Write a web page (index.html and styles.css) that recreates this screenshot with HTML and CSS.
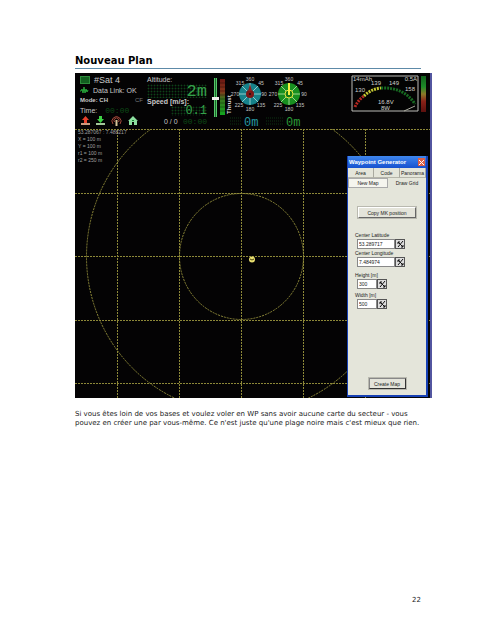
FILE: index.html
```html
<!DOCTYPE html>
<html lang="fr">
<head>
<meta charset="utf-8">
<title>Nouveau Plan</title>
<link rel="stylesheet" href="styles.css">
</head>
<body>
<main class="page">
  <h1 class="title">Nouveau Plan</h1>
  <section class="screen">
    <header class="hud">
      <div class="status">
        <div class="row sat"><span class="lamp"></span>#Sat 4</div>
        <div class="row link">
          <svg width="9" height="7" viewBox="0 0 9 7"><path d="M0 4h1l1-2 1 4 1-6 1 6 1-4 1 3 1-2" fill="none" stroke="#27a83a"/></svg>
          Data Link: OK
        </div>
        <div class="row mode"><b>Mode: CH</b><span class="dim">CF</span></div>
        <div class="row time">Time: <span class="led led-dim">00:00</span></div>
        <div class="row icons">
          <svg width="9" height="10" viewBox="0 0 9 10"><path d="M4.500 0 8 4H6v3H3V4H1z" fill="#e8402c"/><path d="M0 7h9v2H0z" fill="#c99a80"/></svg>
          <svg width="9" height="10" viewBox="0 0 9 10"><path d="M3 0h3v3h2L4.500 7 1 3h2z" fill="#3ed245"/><path d="M0 7h9v2H0z" fill="#a3c79a"/></svg>
          <svg width="11" height="10" viewBox="0 0 11 10"><path d="M2 8a4.500 4.500 0 1 1 7 0M3.500 6a2.500 2.500 0 1 1 4 0" fill="none" stroke="#a84a3c"/><path d="M5.500 4v6" stroke="#d7c59a" stroke-width="2"/></svg>
          <svg width="10" height="10" viewBox="0 0 10 10"><path d="M5 0 10 5H9v4H6V6H4v3H1V5H0z" fill="#8de0a0"/><path d="M4 4h2v1H4z" fill="#168331"/></svg>
        </div>
      </div>
      <div class="flight">
        <div class="label">Altitude:</div>
        <div class="led led-big">2m</div>
        <div class="label speed">Speed [m/s]:</div>
        <div class="led led-mid">0.1</div>
        <div class="count"><span>0 / 0</span><span class="led led-dim">00:00</span></div>
      </div>
      <svg class="thrust" width="20" height="56" viewBox="0 0 20 56">
        <defs>
          <linearGradient id="heat" x2="0" y2="1"><stop stop-color="#6b1712"/><stop offset=".35" stop-color="#85351a"/><stop offset=".55" stop-color="#39751f"/><stop offset="1" stop-color="#12a51f"/></linearGradient>
          <linearGradient id="load" x2="0" y2="1"><stop stop-color="#12601c"/><stop offset=".3" stop-color="#1c8a28"/><stop offset=".5" stop-color="#8a7a28"/><stop offset=".7" stop-color="#8a2218"/><stop offset="1" stop-color="#5c100e"/></linearGradient>
        </defs>
        <path d="M1.500 5v39" stroke="#55c96a" stroke-width="3"/><path d="M1.500 5v39" stroke="#1d6a2d"/>
        <path d="M6 6h5v36H6z" fill="url(#heat)"/>
        <path d="M6 10h5M6 14h5M6 18h5M6 22h5M6 26h5M6 30h5M6 34h5M6 38h5" stroke="#000" stroke-opacity=".35"/>
        <path d="M-2 24h7v3h-7z" fill="#f0f0ec"/>
        <text class="thrust-text" transform="translate(17 41) rotate(-90)">Thrust</text>
      </svg>
      <svg class="dial" width="40" height="56" viewBox="0 0 40 56">
        <circle cx="16" cy="21" r="11" fill="#16828b"/>
        <path d="M16 10v22M5 21h22M8 13l16 16M24 13 8 29" stroke="#91c9c9"/>
        <circle cx="16" cy="21" r="4" fill="#7d1716"/><circle cx="16" cy="21" r="1" fill="#111"/><path d="m16 11-2 7h4z" fill="#8c2422"/>
        <g class="deg"><text x="16" y="8">360</text><text x="27" y="12">45</text><text x="30" y="23">90</text><text x="27" y="34">135</text><text x="16" y="38">180</text><text x="5" y="34">225</text><text x="1" y="23">270</text><text x="6" y="12">315</text></g>
        <path class="matrix" d="M-4 45h12M-4 48h12M-4 51h12"/>
        <text class="seg seg-cyan" x="10" y="53">0m</text>
      </svg>
      <svg class="dial" width="40" height="56" viewBox="0 0 40 56">
        <circle cx="15" cy="21" r="11" fill="#189020"/>
        <path d="M15 10v22M4 21h22M7 13l16 16M23 13 7 29" stroke="#9bd58d"/>
        <circle cx="15" cy="21" r="4" fill="#157b19" stroke="#e6e63b"/><path d="M15 10v12" stroke="#f3f043" stroke-width="2"/>
        <g class="deg"><text x="15" y="8">360</text><text x="26" y="12">45</text><text x="30" y="23">90</text><text x="26" y="34">135</text><text x="15" y="38">180</text><text x="4" y="34">225</text><text x="-1" y="23">270</text><text x="5" y="12">315</text></g>
        <path class="matrix" d="M-8 45h18M-8 48h18M-8 51h18"/>
        <text class="seg seg-green" x="12" y="53">0m</text>
      </svg>
      <svg class="meter" width="78" height="56" viewBox="0 0 78 56">
        <path d="M1 3h66v35H1z" fill="#030303" stroke="#bcbcb7"/>
        <g fill="none" stroke-width="3" stroke-dasharray="2 1">
          <path d="M4 34Q7 27 13 23" stroke="#b42821"/><path d="M13 23Q20 16 30 15" stroke="#c5c833"/><path d="M30 15Q53 14 64 31" stroke="#176b22"/>
        </g>
        <path d="M53 38 64 33" stroke="#a8a99d"/>
        <g class="meter-text"><text x="2" y="8">14mAh</text><text x="66" y="8" text-anchor="end">0.5A</text><text x="20" y="12">139</text><text x="38" y="12">149</text><text x="4" y="19">130</text><text x="54" y="18">158</text><text x="27" y="31">16.8V</text><text x="30" y="37">8W</text></g>
        <path d="M70 3h5v36h-5z" fill="url(#load)"/>
      </svg>
    </header>
    <div class="map">
      <svg class="grid" viewBox="0 0 355 269" preserveAspectRatio="xMinYMin slice">
        <g fill="none" stroke="#8d8838" stroke-dasharray="2 1">
          <path d="M0 .5h355M0 64.500h355M0 127.500h355M0 191.500h355M0 254.500h355"/>
          <path d="M42.500 0v269M104.500 0v269M166.500 0v269M228.500 0v269M290.500 0v269"/>
          <ellipse cx="166.500" cy="127.500" rx="62" ry="63"/>
          <ellipse cx="166.500" cy="127.500" rx="155" ry="157"/>
        </g>
        <circle cx="177" cy="130.500" r="3" fill="#e9df70"/><path d="m175 130 2 1 2-1" fill="none" stroke="#4a4515"/>
      </svg>
      <div class="legend">53.287067 : 7.488217<br>X = 100 m<br>Y = 100 m<br>r1 = 100 m<br>r2 = 250 m</div>
    </div>
    <form class="window">
      <div class="titlebar"><span>Waypoint Generator</span><button class="close" type="button" aria-label="Close"><svg width="5" height="5" viewBox="0 0 5 5"><path d="m0 0 5 5M5 0 0 5" stroke="#fff"/></svg></button></div>
      <div class="tabs upper"><button type="button">Area</button><button type="button">Code</button><button type="button">Panorama</button></div>
      <div class="tabs lower"><button class="active" type="button">New Map</button><button type="button">Draw Grid</button></div>
      <div class="body">
        <button class="push copy" type="button">Copy MK position</button>
        <label for="lat">Center Latitude</label>
        <div class="field"><input id="lat" value="53.289717"><button type="button" aria-label="Latitude"><svg width="7" height="7" viewBox="0 0 7 7"><path d="M1 3V1h2M1 1l5 5M6 4v2H4M6 0 1 6" fill="none" stroke="#111"/></svg></button></div>
        <label for="lon">Center Longitude</label>
        <div class="field"><input id="lon" value="7.484974"><button type="button" aria-label="Longitude"><svg width="7" height="7" viewBox="0 0 7 7"><path d="M1 3V1h2M1 1l5 5M6 4v2H4M6 0 1 6" fill="none" stroke="#111"/></svg></button></div>
        <label class="spaced" for="hgt">Height [m]</label>
        <div class="field short"><input id="hgt" value="300"><button type="button" aria-label="Height"><svg width="7" height="7" viewBox="0 0 7 7"><path d="M1 3V1h2M1 1l5 5M6 4v2H4M6 0 1 6" fill="none" stroke="#111"/></svg></button></div>
        <label for="wid">Width [m]</label>
        <div class="field short"><input id="wid" value="500"><button type="button" aria-label="Width"><svg width="7" height="7" viewBox="0 0 7 7"><path d="M1 3V1h2M1 1l5 5M6 4v2H4M6 0 1 6" fill="none" stroke="#111"/></svg></button></div>
        <button class="push create" type="button">Create Map</button>
      </div>
    </form>
  </section>
  <p class="text">Si vous êtes loin de vos bases et voulez voler en WP sans avoir aucune carte du secteur - vous pouvez en créer une par vous-même. Ce n'est juste qu'une plage noire mais c'est mieux que rien.</p>
  <footer class="folio">22</footer>
</main>
</body>
</html>
```
FILE: styles.css
```css
* { box-sizing: border-box; }
body { margin: 0; background: #fff; color: #222; font-family: "DejaVu Sans", sans-serif; }
svg { display: block; flex: none; overflow: visible; }
button, input { margin: 0; padding: 0; border: 0; border-radius: 0; font: inherit; color: inherit; background: none; }

.page { min-height: 100vh; padding: 54px 63px 34px 75px; display: flex; flex-direction: column; }
.title { margin: 0 11px 4px 0; border-bottom: 1px solid #5d8aa8; font-size: 10px; line-height: 14px; color: #000; }

.screen { position: relative; background: #040304; border-right: 2px solid #5356a0; overflow: hidden; font-family: "Liberation Sans", sans-serif; color: #c8c8c8; }
.hud { display: flex; height: 56px; overflow: hidden; }
.status { width: 68px; padding: 2px 0 0 5px; font-size: 7px; flex: none; }
.row { display: flex; align-items: center; gap: 4px; height: 10px; white-space: nowrap; }
.sat { font-size: 9px; }
.lamp { width: 10px; height: 8px; background: #125f20; border: 1px solid #2c8b3b; }
.mode { justify-content: space-between; font-size: 6px; }
.dim { color: #777; }
.icons { gap: 6px; height: 12px; padding-left: 1px; }
.led { font-family: "Liberation Mono", monospace; color: #35a04a; }
.led-dim { color: #0c4a16; font-size: 8px; }
.time .led { padding-left: 4px; }

.flight { width: 64px; padding: 2px 0 0 4px; flex: none; font-size: 7px; line-height: 9px; display: flex; flex-direction: column; }
.led-big, .led-mid { text-align: right; background-image: radial-gradient(circle, #0d4217 20%, transparent 60%); background-size: 3px 3px; }
.led-big { height: 14px; font-size: 17px; line-height: 15px; }
.led-mid { height: 10px; margin-left: 24px; font-size: 12px; line-height: 10px; }
.speed { font-weight: bold; line-height: 8px; white-space: nowrap; }
.count { display: flex; justify-content: space-between; padding-left: 17px; line-height: 12px; }

.thrust { margin-left: 7px; }
.thrust-text { font-size: 6px; font-weight: bold; fill: #ddd; }
.deg { font-size: 5px; fill: #c8c8c8; text-anchor: middle; }
.matrix { stroke: #0c3313; stroke-dasharray: 1 1; }
.seg { font: 12px "Liberation Mono", monospace; }
.seg-cyan { fill: #279aa3; }
.seg-green { fill: #2a9936; }
.meter { margin: 0 1px 0 auto; }
.meter-text { font-size: 6px; fill: #d0d0cc; }

.map { position: relative; }
.grid { width: 100%; height: auto; overflow: hidden; }
.legend { position: absolute; left: 3px; top: 0; font-size: 5px; line-height: 7px; color: #a0a0a0; }

.window { position: absolute; right: 2px; top: 83px; bottom: 1px; width: 81px; display: flex; flex-direction: column; border: solid #1640b4; border-width: 0 2px 2px 1px; background: #e4e5da; color: #222; font-size: 5px; }
.titlebar { display: flex; align-items: center; justify-content: space-between; height: 12px; padding: 0 1px; background: linear-gradient(#3f87ee, #1651cf); color: #fff; font-weight: bold; font-size: 6px; white-space: nowrap; }
.close { display: grid; place-items: center; width: 7px; height: 8px; background: #dc6048; }
.tabs { display: flex; height: 10px; }
.tabs button { flex: 1; border-right: 1px solid #a9a99f; border-bottom: 1px solid #b5b5aa; }
.lower button { border-bottom: 0; border-right: 0; }
.lower .active { background: #f5f5ee; border: 1px solid #aaa; }
.body { display: flex; flex-direction: column; align-items: flex-start; flex: 1; padding: 19px 7px 6px; line-height: 8px; }
.push { border: 1px solid; border-color: #fff #666 #666 #fff; outline: 1px solid #b9b9af; background: #e4e4da; height: 11px; white-space: nowrap; }
.copy { width: 58px; align-self: center; margin-bottom: 13px; }
.field { display: flex; width: 48px; height: 10px; margin-left: 2px; }
.field input { flex: 1; min-width: 0; padding-left: 1px; background: #fff; border: 1px solid #888; }
.field button { display: grid; place-items: center; width: 10px; border: 1px solid #555; background: #ddd; }
.short { width: 30px; }
.short + label { margin-top: 2px; }
.spaced { margin-top: 4px; }
.create { width: 37px; align-self: center; margin-top: auto; border-color: #888 #333 #333 #888; }

.text { margin: 12px 0 0; font-size: 7px; line-height: 9px; }
.folio { margin: auto 11px 0 0; text-align: right; font-size: 7px; line-height: 12px; }
```
